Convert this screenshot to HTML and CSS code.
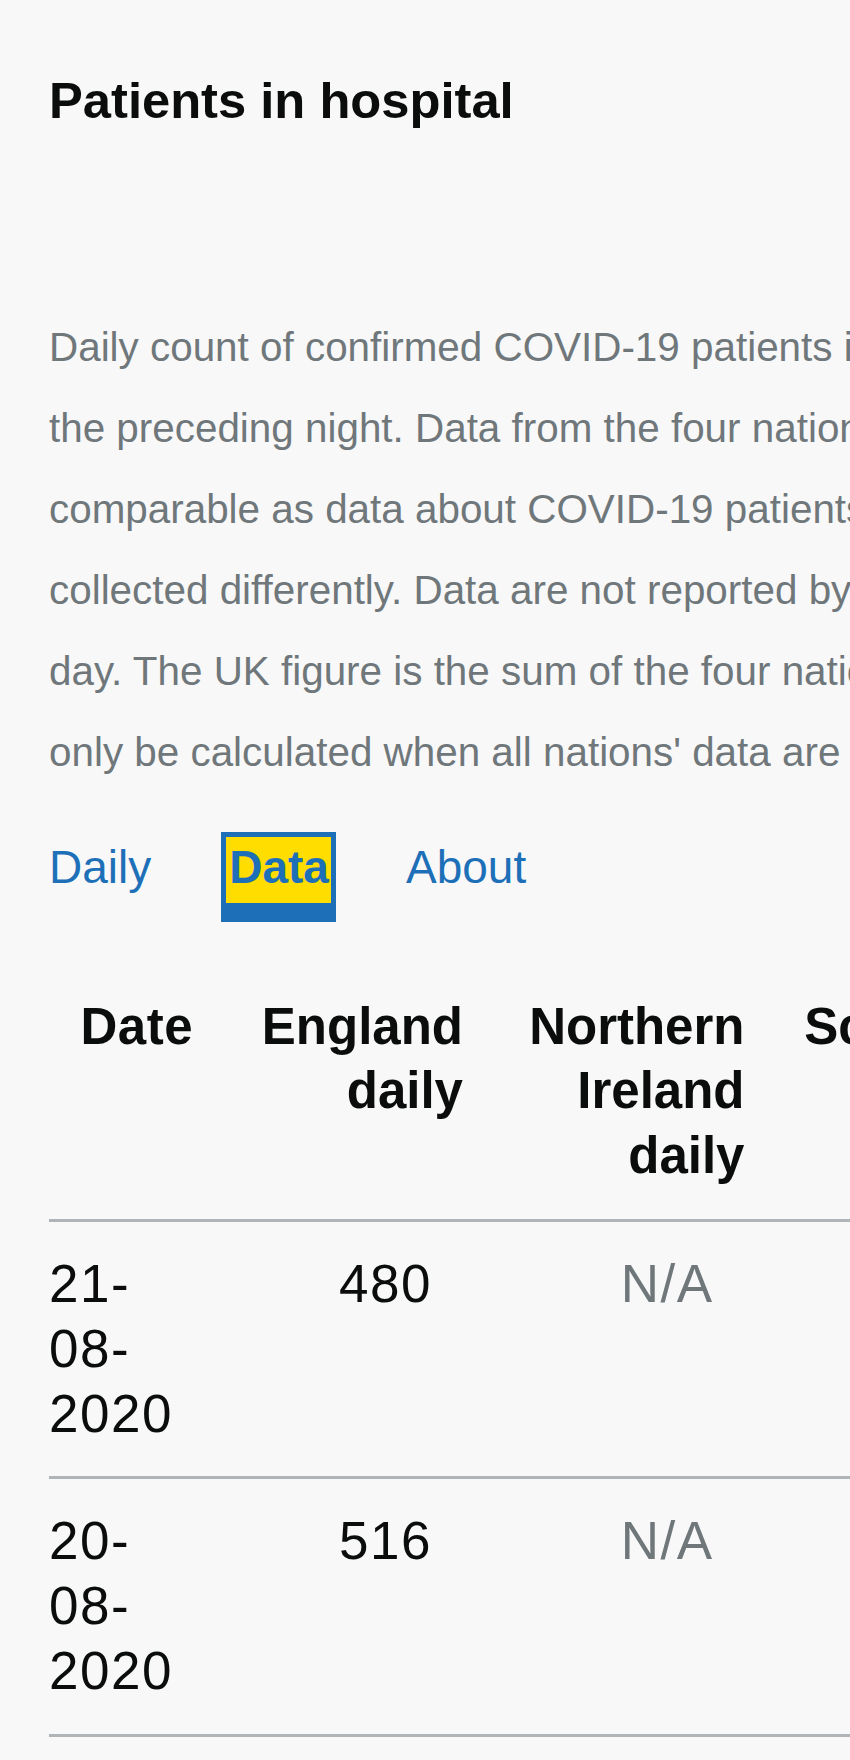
FILE: index.html
```html
<!DOCTYPE html>
<html lang="en">
<head>
<meta charset="utf-8">
<title>Patients in hospital</title>
<link rel="stylesheet" href="styles.css">
</head>
<body>
<main class="page">
  <h1 class="title">Patients in hospital</h1>
  <p class="summary">Daily count of confirmed COVID-19 patients in hospital at 8am or<br>the preceding night. Data from the four nations are not directly<br>comparable as data about COVID-19 patients in hospital are<br>collected differently. Data are not reported by each nation every<br>day. The UK figure is the sum of the four nations' figures, and can<br>only be calculated when all nations' data are available.</p>
  <nav class="tabs">
    <a class="tab" href="#daily">Daily</a>
    <a class="tab tab-active" href="#data">Data</a>
    <a class="tab" href="#about">About</a>
  </nav>
  <table class="data-table">
    <colgroup>
      <col class="col-date">
      <col class="col-england">
      <col class="col-ni">
      <col class="col-scotland">
      <col class="col-wales">
      <col class="col-uk">
    </colgroup>
    <thead>
      <tr>
        <th class="th-date">Date</th>
        <th>England daily</th>
        <th>Northern Ireland daily</th>
        <th>Scotland daily</th>
        <th>Wales daily</th>
        <th>UK daily</th>
      </tr>
    </thead>
    <tbody>
      <tr>
        <td class="date">21-<wbr>08-<wbr>2020</td>
        <td class="num">480</td>
        <td class="num na">N/A</td>
        <td class="num na">N/A</td>
        <td class="num na">N/A</td>
        <td class="num na">N/A</td>
      </tr>
      <tr>
        <td class="date">20-<wbr>08-<wbr>2020</td>
        <td class="num">516</td>
        <td class="num na">N/A</td>
        <td class="num na">N/A</td>
        <td class="num na">N/A</td>
        <td class="num na">N/A</td>
      </tr>
    </tbody>
  </table>
</main>
</body>
</html>
```

FILE: styles.css
```css
html {
  overflow-x: hidden;
  background: #f8f8f8;
}

body {
  margin: 0;
  background: #f8f8f8;
  color: #0b0c0c;
  font-family: "Liberation Sans", Arial, sans-serif;
}

.page {
  padding: 0 0 0 49px;
}

.title {
  margin: 70px 0 0;
  font-size: 50.7px;
  line-height: 62px;
  font-weight: 700;
  color: #0b0c0c;
}

.summary {
  margin: 174.5px 0 0;
  font-size: 40.4px;
  line-height: 81px;
  color: #6f777b;
  white-space: nowrap;
}

.tabs {
  display: flex;
  align-items: baseline;
  gap: 70px;
  margin-top: 39.8px;
}

.tab {
  font-size: 46px;
  line-height: 56px;
  color: #1d70b8;
  text-decoration: none;
}

.tab-active {
  font-weight: 700;
  background: #ffdd00;
  padding: 2px 2px 7.4px 3px;
  border: 5px solid #1d70b8;
  border-bottom-width: 19px;
}

.data-table {
  margin-top: 53px;
  width: 1507px;
  table-layout: fixed;
  border-collapse: collapse;
}

.col-date { width: 163px; }
.col-england { width: 268px; }
.col-ni { width: 281.5px; }
.col-scotland { width: 275px; }
.col-wales { width: 260px; }
.col-uk { width: 260px; }

.data-table th {
  padding: 20px 17px 31px 0;
  font-size: 51px;
  line-height: 64.4px;
  font-weight: 700;
  text-align: right;
  vertical-align: top;
  border-bottom: 3px solid #b1b4b6;
}

.data-table th.th-date {
  padding-right: 19px;
  letter-spacing: 0.5px;
}

.data-table td {
  padding: 29px 0 30.5px;
  font-size: 53px;
  line-height: 65px;
  letter-spacing: 1.5px;
  vertical-align: top;
  border-bottom: 3px solid #b1b4b6;
  color: #0b0c0c;
}

.data-table td.date {
  text-align: left;
  padding-right: 20px;
}

.data-table td.num {
  text-align: right;
  padding-right: 48px;
}

.data-table td.na {
  color: #6f777b;
}
```
